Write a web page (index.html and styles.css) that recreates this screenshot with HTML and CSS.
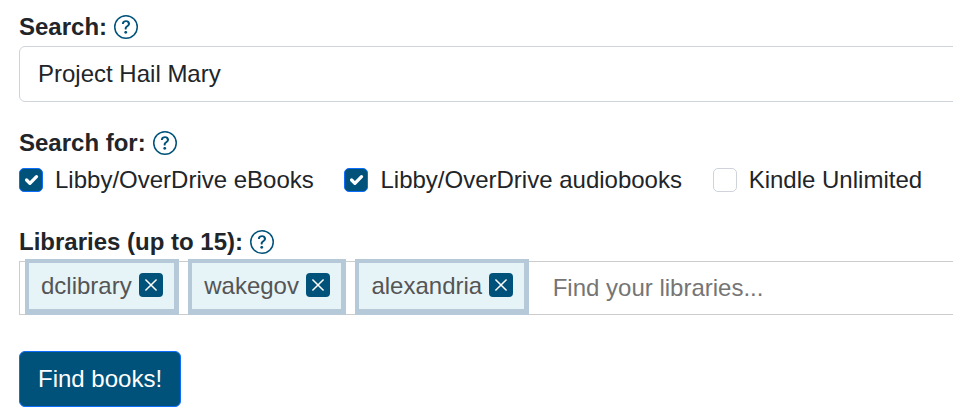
FILE: index.html
```html
<!DOCTYPE html>
<html lang="en">
<head>
    <meta charset="UTF-8">
    <title>Find books</title>
    <link rel="stylesheet" href="styles.css">
</head>

<body>
    <form class="search-form">
        <div class="field-label">
            <label for="search">Search:</label>
            <svg class="help-icon" viewBox="0 0 16 16"><path d="M8 15A7 7 0 1 1 8 1a7 7 0 0 1 0 14zm0 1A8 8 0 1 0 8 0a8 8 0 0 0 0 16z"/><path d="M5.255 5.786a.237.237 0 0 0 .241.247h.825c.138 0 .248-.113.266-.25.09-.656.54-1.134 1.342-1.134.686 0 1.314.343 1.314 1.168 0 .635-.374.927-.965 1.371-.673.489-1.206 1.06-1.168 1.987l.003.217a.25.25 0 0 0 .25.246h.811a.25.25 0 0 0 .25-.25v-.105c0-.718.273-.927 1.01-1.486.609-.463 1.244-.977 1.244-2.056 0-1.511-1.276-2.241-2.673-2.241-1.267 0-2.655.59-2.75 2.286zm1.557 5.763c0 .533.425.927 1.01.927.609 0 1.028-.394 1.028-.927 0-.552-.42-.94-1.029-.94-.584 0-1.009.388-1.009.94z"/></svg>
        </div>
        <input class="search-input" id="search" type="text" value="Project Hail Mary">

        <div class="field-label search-for">
            <span>Search for:</span>
            <svg class="help-icon" viewBox="0 0 16 16"><path d="M8 15A7 7 0 1 1 8 1a7 7 0 0 1 0 14zm0 1A8 8 0 1 0 8 0a8 8 0 0 0 0 16z"/><path d="M5.255 5.786a.237.237 0 0 0 .241.247h.825c.138 0 .248-.113.266-.25.09-.656.54-1.134 1.342-1.134.686 0 1.314.343 1.314 1.168 0 .635-.374.927-.965 1.371-.673.489-1.206 1.06-1.168 1.987l.003.217a.25.25 0 0 0 .25.246h.811a.25.25 0 0 0 .25-.25v-.105c0-.718.273-.927 1.01-1.486.609-.463 1.244-.977 1.244-2.056 0-1.511-1.276-2.241-2.673-2.241-1.267 0-2.655.59-2.75 2.286zm1.557 5.763c0 .533.425.927 1.01.927.609 0 1.028-.394 1.028-.927 0-.552-.42-.94-1.029-.94-.584 0-1.009.388-1.009.94z"/></svg>
        </div>
        <div class="check-row">
            <label class="check"><input type="checkbox" checked>Libby/OverDrive eBooks</label>
            <label class="check"><input type="checkbox" checked>Libby/OverDrive audiobooks</label>
            <label class="check"><input type="checkbox">Kindle Unlimited</label>
        </div>

        <div class="field-label libraries">
            <span>Libraries (up to 15):</span>
            <svg class="help-icon" viewBox="0 0 16 16"><path d="M8 15A7 7 0 1 1 8 1a7 7 0 0 1 0 14zm0 1A8 8 0 1 0 8 0a8 8 0 0 0 0 16z"/><path d="M5.255 5.786a.237.237 0 0 0 .241.247h.825c.138 0 .248-.113.266-.25.09-.656.54-1.134 1.342-1.134.686 0 1.314.343 1.314 1.168 0 .635-.374.927-.965 1.371-.673.489-1.206 1.06-1.168 1.987l.003.217a.25.25 0 0 0 .25.246h.811a.25.25 0 0 0 .25-.25v-.105c0-.718.273-.927 1.01-1.486.609-.463 1.244-.977 1.244-2.056 0-1.511-1.276-2.241-2.673-2.241-1.267 0-2.655.59-2.75 2.286zm1.557 5.763c0 .533.425.927 1.01.927.609 0 1.028-.394 1.028-.927 0-.552-.42-.94-1.029-.94-.584 0-1.009.388-1.009.94z"/></svg>
        </div>
        <div class="tag-box">
            <span class="tag">dclibrary<span class="tag-remove"><svg viewBox="0 0 16 16"><path d="M4.3 4.3l7.4 7.4M11.7 4.3l-7.4 7.4"/></svg></span></span>
            <span class="tag">wakegov<span class="tag-remove"><svg viewBox="0 0 16 16"><path d="M4.3 4.3l7.4 7.4M11.7 4.3l-7.4 7.4"/></svg></span></span>
            <span class="tag">alexandria<span class="tag-remove"><svg viewBox="0 0 16 16"><path d="M4.3 4.3l7.4 7.4M11.7 4.3l-7.4 7.4"/></svg></span></span>
            <input class="tag-input" type="text" placeholder="Find your libraries...">
        </div>

        <button class="submit-btn" type="button">Find books!</button>
    </form>
</body>
</html>
```

FILE: styles.css
```css
html, body {
    overflow: hidden;
}

body {
    margin: 0;
    background: #fff;
    color: #212529;
    font-family: 'Liberation Sans', Arial, sans-serif;
    font-size: 24px;
    line-height: 36px;
}

.search-form {
    width: 1000px;
    padding: 9px 0 0 19px;
}

.field-label {
    display: flex;
    align-items: center;
    gap: 7px;
    height: 36px;
    font-weight: 700;
    margin-bottom: 1px;
}

.search-for {
    margin-top: 23px;
    margin-bottom: 1px;
}

.libraries {
    margin-top: 26px;
    margin-bottom: 1px;
}

.help-icon {
    width: 24px;
    height: 24px;
    fill: #00527a;
}

.search-input {
    display: block;
    box-sizing: border-box;
    width: 100%;
    height: 56px;
    padding: 9px 18px;
    border: 1px solid #ced4da;
    border-radius: 6px;
    color: #212529;
    font: inherit;
}

.check-row {
    display: flex;
    gap: 30.7px;
}

.check {
    display: flex;
    align-items: center;
    gap: 12px;
}

.check input {
    appearance: none;
    box-sizing: border-box;
    width: 24px;
    height: 24px;
    margin: 0;
    border: 1px solid #ced4da;
    border-radius: 5px;
    background: #fff;
}

.check input:checked {
    border-color: #0d6efd;
    background: #00527a url("data:image/svg+xml,%3csvg xmlns='http://www.w3.org/2000/svg' viewBox='0 0 20 20'%3e%3cpath fill='none' stroke='%23fff' stroke-linecap='round' stroke-linejoin='round' stroke-width='3' d='m6 10 3 3 6-6'/%3e%3c/svg%3e") center / 100% no-repeat;
}

.tag-box {
    display: flex;
    gap: 9.5px;
    box-sizing: border-box;
    height: 54px;
    padding-left: 5px;
    border: 1px solid #ccc;
    border-right: 0;
}

.tag {
    display: flex;
    align-items: center;
    gap: 7px;
    box-sizing: border-box;
    height: 56px;
    margin-top: -3px;
    padding: 0 11px 0 12px;
    border-style: solid;
    border-color: #b5c9d8;
    border-width: 4px 5px 6px 4px;
    background: #e6f4f7;
    color: #555;
}

.tag-remove {
    display: flex;
    width: 24px;
    height: 24px;
    margin-bottom: 2px;
    border-radius: 4px;
    background: #00527a;
}

.tag-remove svg {
    fill: none;
    stroke: #fff;
    stroke-width: 1;
}

.tag-input {
    flex: 1;
    min-width: 0;
    padding: 0 14px;
    border: 0;
    outline: 0;
    color: #212529;
    font: inherit;
}

.tag-input::placeholder {
    color: #757575;
}

.submit-btn {
    display: block;
    box-sizing: border-box;
    height: 56px;
    margin-top: 36px;
    padding: 0 18px;
    border: 1px solid #0d6efd;
    border-radius: 6px;
    background: #00527a;
    color: #fff;
    font: inherit;
}
```
